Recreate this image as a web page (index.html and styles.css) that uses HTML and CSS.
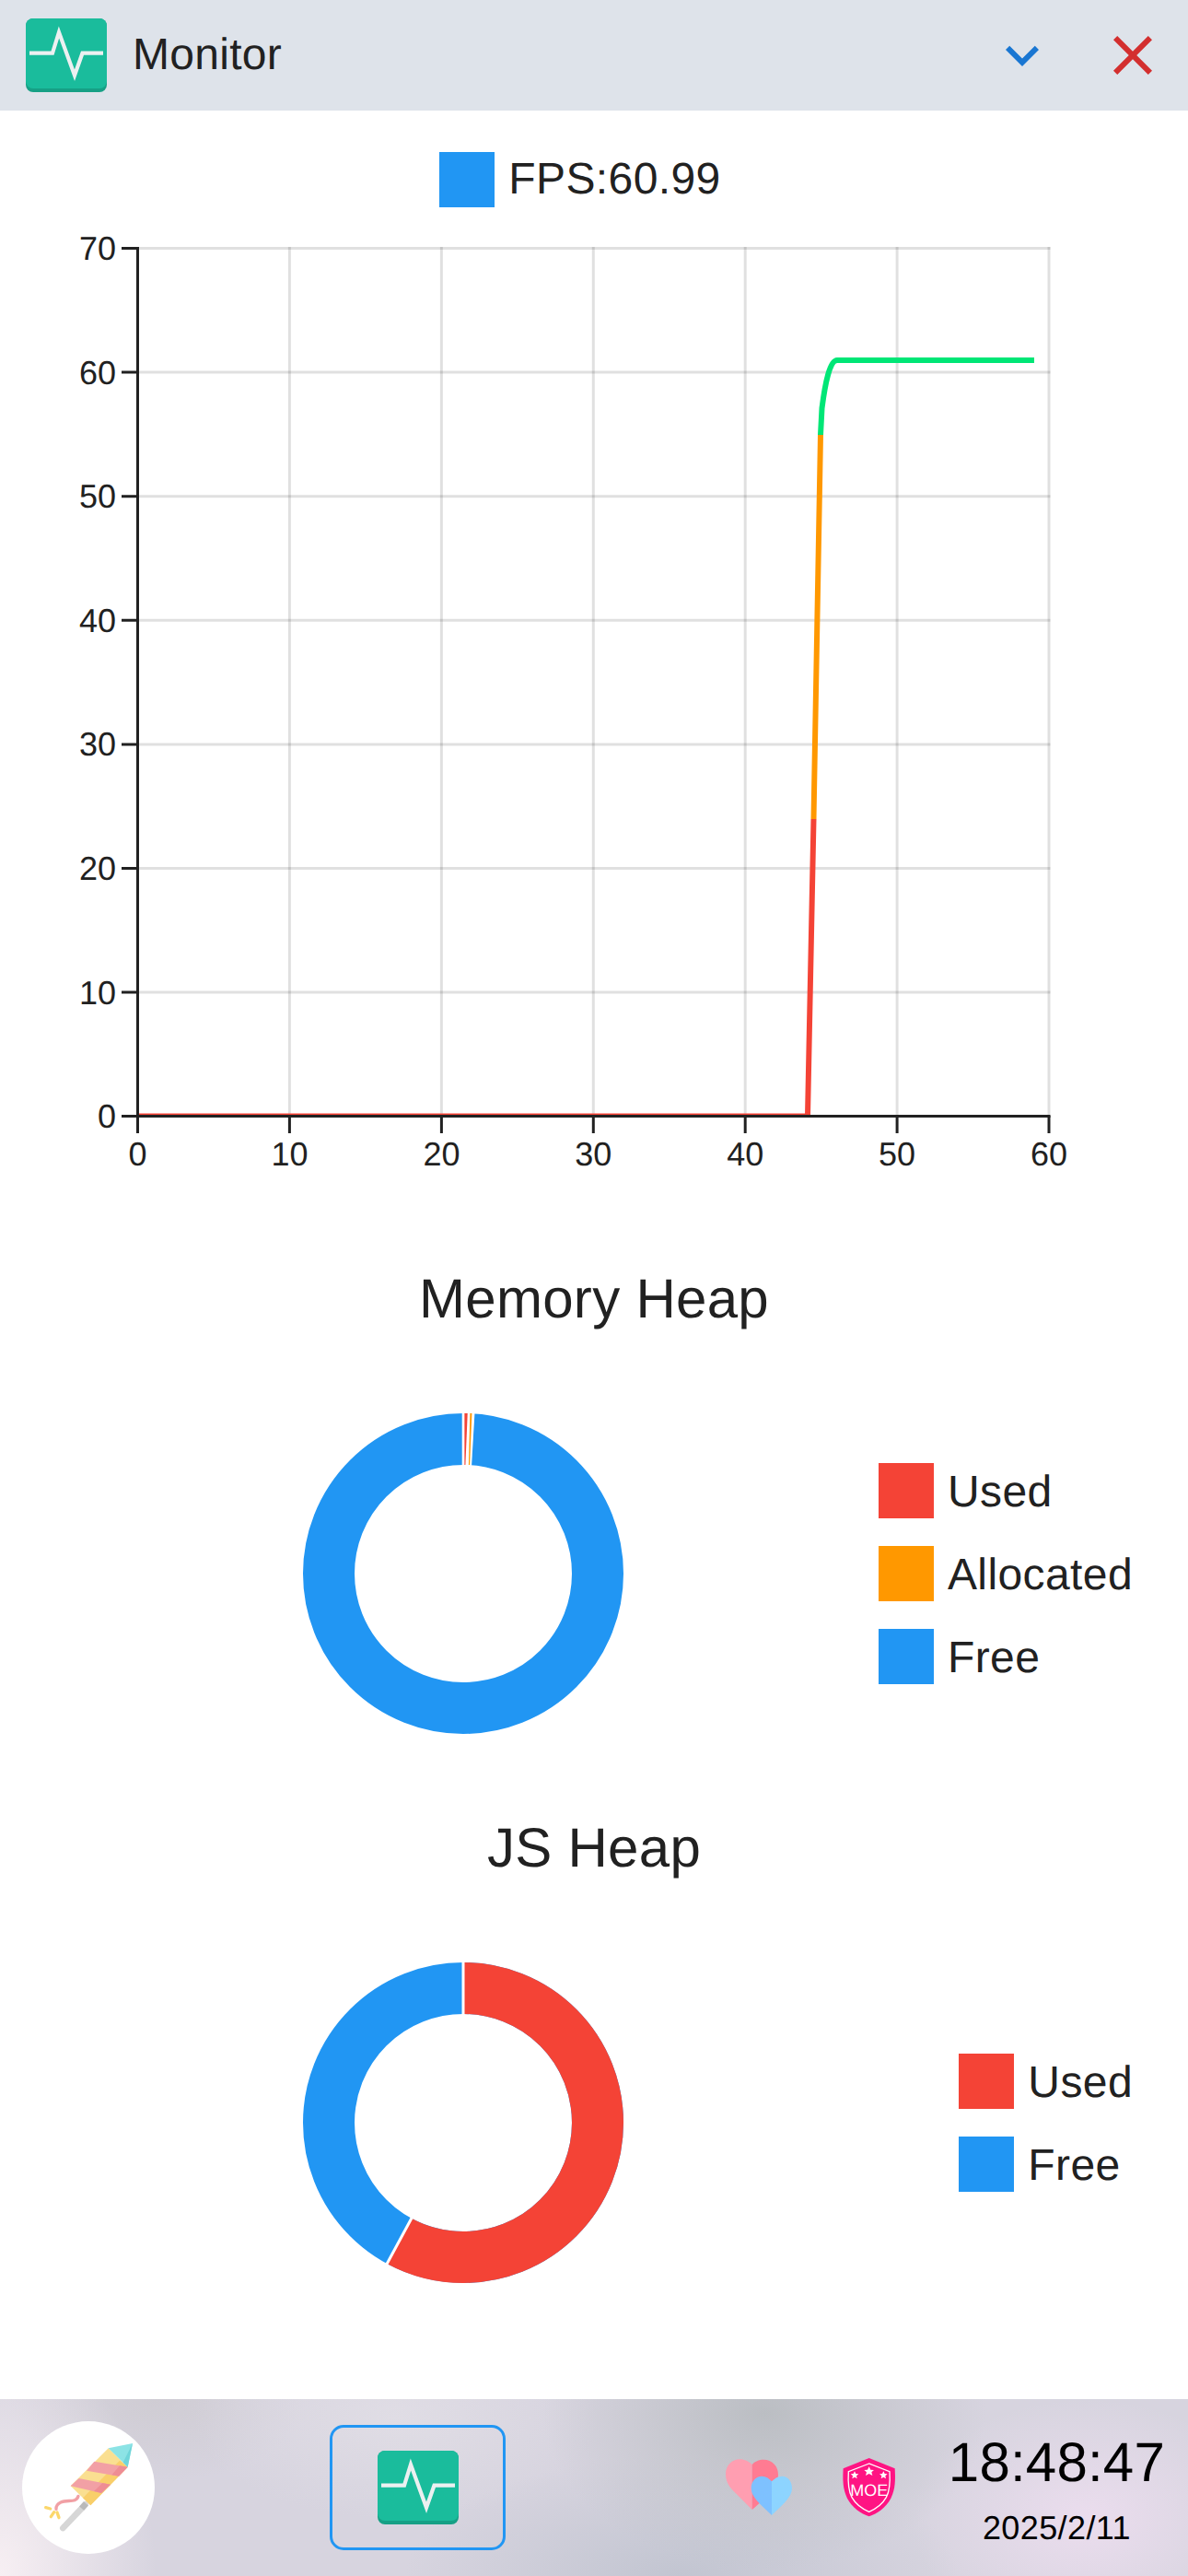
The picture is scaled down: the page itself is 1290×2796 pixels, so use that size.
FILE: index.html
```html
<!doctype html>
<html lang="en">
<head>
<meta charset="utf-8">
<meta name="viewport" content="width=device-width, initial-scale=1">
<title>Monitor</title>
<link rel="stylesheet" href="styles.css">
</head>
<body>

<svg class="defs" width="0" height="0">
	<symbol id="icoPulse" viewBox="0 0 88 80">
		<rect width="88" height="80" rx="8" fill="#16a085" />
		<rect width="88" height="76" rx="8" fill="#1abc9c" />
		<polyline points="4,37.7 29,37.7 36,15 53,61.7 61.5,37.7 84,37.7" fill="none" stroke="#ecf0f1" stroke-width="4.2" />
	</symbol>
</svg>

<header class="titleBar">
	<svg class="appIcon"><use href="#icoPulse" /></svg>
	<div class="appTitle">Monitor</div>
	<button class="winBtn">
		<svg viewBox="0 0 24 24"><path fill="#1976d2" d="M16.59 8.59 12 13.17 7.41 8.59 6 10l6 6 6-6z" /></svg>
	</button>
	<button class="winBtn">
		<svg viewBox="0 0 24 24"><path fill="#d32f2f" d="M19 6.41 17.59 5 12 10.59 6.41 5 5 6.41 10.59 12 5 17.59 6.41 19 12 13.41 17.59 19 19 17.59 13.41 12z" /></svg>
	</button>
</header>

<main class="content">

	<div class="fpsLegend">
		<span class="swatch blue"></span>
		<span>FPS:60.99</span>
	</div>

	<svg class="fpsChart" viewBox="0 225 1290 1065">
		<defs>
			<linearGradient id="fpsStroke" gradientUnits="userSpaceOnUse" x1="0" y1="1212" x2="0" y2="391">
				<stop offset="0.393" stop-color="#f44336" />
				<stop offset="0.393" stop-color="#ff9800" />
				<stop offset="0.901" stop-color="#ff9800" />
				<stop offset="0.901" stop-color="#00e676" />
			</linearGradient>
		</defs>

		<g class="grid">
			<path d="M149.5 269.5H1140.5M149.5 404.1H1140.5M149.5 538.7H1140.5M149.5 673.3H1140.5M149.5 807.9H1140.5M149.5 942.5H1140.5M149.5 1077.1H1140.5" />
			<path d="M314.4 268V1211M479.4 268V1211M644.3 268V1211M809.2 268V1211M974.1 268V1211M1139 268V1211" />
		</g>

		<path class="fpsZero" d="M149.5 1209.5H877" />
		<path class="fpsLine" d="M877 1211 L883.5 889 L891 472 L892.5 443 C896 416 901 391 909 391 L1123 391" />

		<g class="axis">
			<path d="M149.5 268V1230" />
			<path d="M132 1211.5H1140.5" />
			<path d="M132 269.5H149.5M132 404.1H149.5M132 538.7H149.5M132 673.3H149.5M132 807.9H149.5M132 942.5H149.5M132 1077.1H149.5" />
			<path d="M314.4 1211V1230M479.4 1211V1230M644.3 1211V1230M809.2 1211V1230M974.1 1211V1230M1139 1211V1230" />
		</g>

		<g class="tickY">
			<text x="126" y="282">70</text>
			<text x="126" y="417">60</text>
			<text x="126" y="551">50</text>
			<text x="126" y="686">40</text>
			<text x="126" y="820">30</text>
			<text x="126" y="955">20</text>
			<text x="126" y="1090">10</text>
			<text x="126" y="1224">0</text>
		</g>
		<g class="tickX">
			<text x="149.5" y="1265">0</text>
			<text x="314.4" y="1265">10</text>
			<text x="479.4" y="1265">20</text>
			<text x="644.3" y="1265">30</text>
			<text x="809.2" y="1265">40</text>
			<text x="974.1" y="1265">50</text>
			<text x="1139" y="1265">60</text>
		</g>
	</svg>

	<section class="heap heapFirst">
		<div class="heapTitle">Memory Heap</div>
		<div class="heapRow">
			<svg class="donut" viewBox="0 0 360 360">
				<circle cx="180" cy="180" r="146" fill="none" stroke="#2196f3" stroke-width="56" />
				<polygon points="178.7,0 192.8,0 188.9,66 178.7,66" fill="#fff" />
				<polygon points="181.4,6 184.7,6 182.4,62 181.4,62" fill="#f44336" />
				<polygon points="187.4,6 189.4,6 187.1,62 185.9,62" fill="#ff9800" />
			</svg>
			<ul class="legend">
				<li><span class="swatch red"></span><span class="legendText">Used</span></li>
				<li><span class="swatch orange"></span><span class="legendText">Allocated</span></li>
				<li><span class="swatch blue"></span><span class="legendText">Free</span></li>
			</ul>
		</div>
	</section>

	<section class="heap">
		<div class="heapTitle">JS Heap</div>
		<div class="heapRow">
			<svg class="donut" viewBox="0 0 360 360">
				<circle cx="180" cy="180" r="146" fill="none" stroke="#2196f3" stroke-width="56" />
				<circle cx="180" cy="180" r="146" fill="none" stroke="#f44336" stroke-width="56" stroke-dasharray="531 917.3" transform="rotate(-90 180 180)" />
				<path d="M180 0V66M126.7 278.5L94.4 338.3" stroke="#fff" stroke-width="3" />
			</svg>
			<ul class="legend">
				<li><span class="swatch red"></span><span class="legendText">Used</span></li>
				<li><span class="swatch blue"></span><span class="legendText">Free</span></li>
			</ul>
		</div>
	</section>

</main>

<footer class="taskBar">

	<div class="startBtn">
		<svg viewBox="-12 0 360 360">
			<line x1="158" y1="235" x2="85" y2="312" stroke="#d6d6d6" stroke-width="20" stroke-linecap="round" />
			<line x1="160" y1="232" x2="146" y2="248" stroke="#b9b9b9" stroke-width="20" />
			<path d="M135 208 C128 232 100 218 78 228 C66 234 62 240 63 250" fill="none" stroke="#f1a0a5" stroke-width="10" stroke-linecap="round" />
			<path d="M29 245L44 249M56 260L46 275M66 261L72 278" stroke="#fbd76c" stroke-width="10" stroke-linecap="round" />
			<polygon points="233,52 296,113 175,238 110,175" fill="#fadf91" />
			<polygon points="296,113 175,238 150,214 270,92" fill="#f9cf6a" />
			<polygon points="187,95 296,113 267,143 162,125" fill="#f2a0a5" />
			<polygon points="137,150 240,170 210,198 110,175" fill="#f2a0a5" />
			<polygon points="270,109 296,113 267,143 244,139" fill="#ee8d94" />
			<polygon points="214,165 240,170 210,198 186,192" fill="#ee8d94" />
			<polygon points="233,52 312,36 296,113" fill="#8ce3e5" />
			<polygon points="312,36 296,113 281,98" fill="#6fd5d9" />
		</svg>
	</div>

	<div class="taskBtn">
		<svg class="appIcon"><use href="#icoPulse" /></svg>
	</div>

	<svg class="trayHearts" viewBox="0 0 270 240">
		<path fill="#ff9eb1" d="M110 192 L50 132 C30 112 24 95 24 75 C24 48 45 28 70 28 C85 28 100 35 110 45 Z" />
		<path fill="#ff7b92" d="M110 45 C118 35 132 29 148 29 C175 29 195 50 195 78 C195 110 160 150 110 192 Z" />
		<path fill="#7ec1ff" d="M174 100 C165 90 155 83 142 83 C122 83 107 100 107 122 C107 150 135 172 174 210 Z" />
		<path fill="#8dd4ff" d="M174 100 C183 90 195 83 208 83 C227 83 240 100 240 122 C240 150 213 172 174 210 Z" />
	</svg>

	<svg class="trayShield" viewBox="390 0 210 240">
		<path fill="#ff1483" d="M491 24 L407 58 C405 95 405 125 420 155 C435 185 465 205 491 214 C517 205 547 185 562 155 C577 125 577 95 575 58 Z" />
		<path fill="none" stroke="#fff" stroke-width="4" d="M491 42 L424 68 C422 100 422 128 435 152 C448 175 470 190 491 199 C512 190 534 175 547 152 C560 128 560 100 558 68 Z" />
		<polygon fill="#fff" points="491,52 496,62 507,63 499,70 502,81 491,75 480,81 483,70 475,63 486,62" />
		<polygon fill="#fff" points="444,67 448,75 457,76 450,82 452,91 444,86 436,91 438,82 431,76 440,75" />
		<polygon fill="#fff" points="538,67 542,75 551,76 544,82 546,91 538,86 530,91 532,82 525,76 534,75" />
		<text class="shieldText" x="491" y="147">MOE</text>
	</svg>

	<div class="clock">
		<div class="clockTime">18:48:47</div>
		<div class="clockDate">2025/2/11</div>
	</div>

</footer>

</body>
</html>
```

FILE: styles.css
```css
* { box-sizing: border-box; }

html { height: 100%; }

body { color: #212121; display: flex; flex-direction: column; font-family: "Liberation Sans", Arial, sans-serif;
	height: 100vh; margin: 0; overflow: hidden; text-rendering: geometricPrecision; }

.defs { position: absolute; }

/* title bar */

.titleBar { align-items: center; background-color: #dee3ea; display: flex; flex: none; height: 120px; padding-left: 28px; }

.appIcon { display: block; flex: none; height: 80px; width: 88px; }

.appTitle { flex: 1; font-size: 48px; letter-spacing: 0.3px; line-height: 60px; margin-left: 28px; }

.winBtn { align-items: center; background: none; border: none; display: flex; height: 120px; justify-content: center;
	padding: 0; width: 120px; }

.winBtn svg { display: block; height: 72px; width: 72px; }

/* charts */

.content { flex: 1; min-height: 0; }

.swatch { display: block; flex: none; height: 60px; width: 60px; }

.red { background-color: #f44336; }
.orange { background-color: #ff9800; }
.blue { background-color: #2196f3; }

.fpsLegend { align-items: center; display: flex; font-size: 48px; gap: 15px; justify-content: center; letter-spacing: 0.4px;
	line-height: 60px; padding: 45px 30px 0 0; }

.fpsChart { display: block; height: 1065px; width: 1290px; }

.grid path { fill: none; stroke: rgba( 0, 0, 0, 0.12 ); stroke-width: 3; }

.axis path { fill: none; stroke: #212121; stroke-width: 3; }

.fpsZero { fill: none; stroke: #f44336; stroke-width: 2; }

.fpsLine { fill: none; stroke: url( #fpsStroke ); stroke-width: 6; }

.tickY text, .tickX text { fill: #212121; font-size: 36px; }
.tickY text { text-anchor: end; }
.tickX text { text-anchor: middle; }

.heap { margin-top: 82px; }
.heapFirst { margin-top: 84px; }

.heapTitle { font-size: 60px; letter-spacing: 0.3px; line-height: 72px; text-align: center; }

.heapRow { align-items: center; display: flex; justify-content: space-between; margin-top: 82px; padding: 0 60px 0 322.6px; }

.donut { display: block; flex: none; height: 360px; width: 360px; }

.legend { display: flex; flex-direction: column; font-size: 48px; gap: 30px; letter-spacing: 0.4px; line-height: 60px;
	list-style: none; margin: 0; padding: 0; }

.legend li { align-items: center; display: flex; gap: 15px; height: 60px; }

.legendText { padding-top: 3px; }

/* task bar */

.taskBar { align-items: center; background:
		radial-gradient( ellipse 170px 260px at 0 100%, #f7eff3, rgba( 247, 239, 243, 0 ) ),
		radial-gradient( ellipse 240px 170px at 830px 15px, #bbbec3, rgba( 187, 190, 195, 0 ) ),
		radial-gradient( ellipse 300px 130px at 740px 100%, #c2c5d1, rgba( 194, 197, 209, 0 ) ),
		radial-gradient( ellipse 190px 130px at 1180px 130px, #ebddee, rgba( 235, 221, 238, 0 ) ),
		radial-gradient( ellipse 220px 110px at 430px 20px, #e0dde5, rgba( 224, 221, 229, 0 ) ),
		radial-gradient( ellipse 160px 90px at 170px 0, #cfccd3, rgba( 207, 204, 211, 0 ) ),
		#d7d4df;
	color: #000; display: flex; flex: none; height: 192px; padding: 0 25px 0 24px; }

.startBtn { align-items: center; background-color: #fff; border-radius: 50%; display: flex; flex: none; height: 144px;
	justify-content: center; width: 144px; }

.startBtn svg { display: block; height: 120px; width: 120px; }

.taskBtn { align-items: center; border: 3px solid #2196f3; border-radius: 15px; display: flex; flex: none; height: 136px;
	justify-content: center; margin-left: 190px; width: 191px; }

.trayHearts { display: block; flex: none; height: 80px; margin-left: auto; width: 90px; }

.trayShield { display: block; flex: none; height: 80px; margin-left: 40px; width: 70px; }

.shieldText { fill: #fff; font-size: 54px; text-anchor: middle; }

.clock { flex: none; margin-left: 50px; padding-top: 8px; text-align: center; }

.clockTime { font-size: 60px; letter-spacing: 0.2px; line-height: 72px; }

.clockDate { font-size: 36px; letter-spacing: 0.4px; line-height: 54px; margin-top: 7.5px; }
```
